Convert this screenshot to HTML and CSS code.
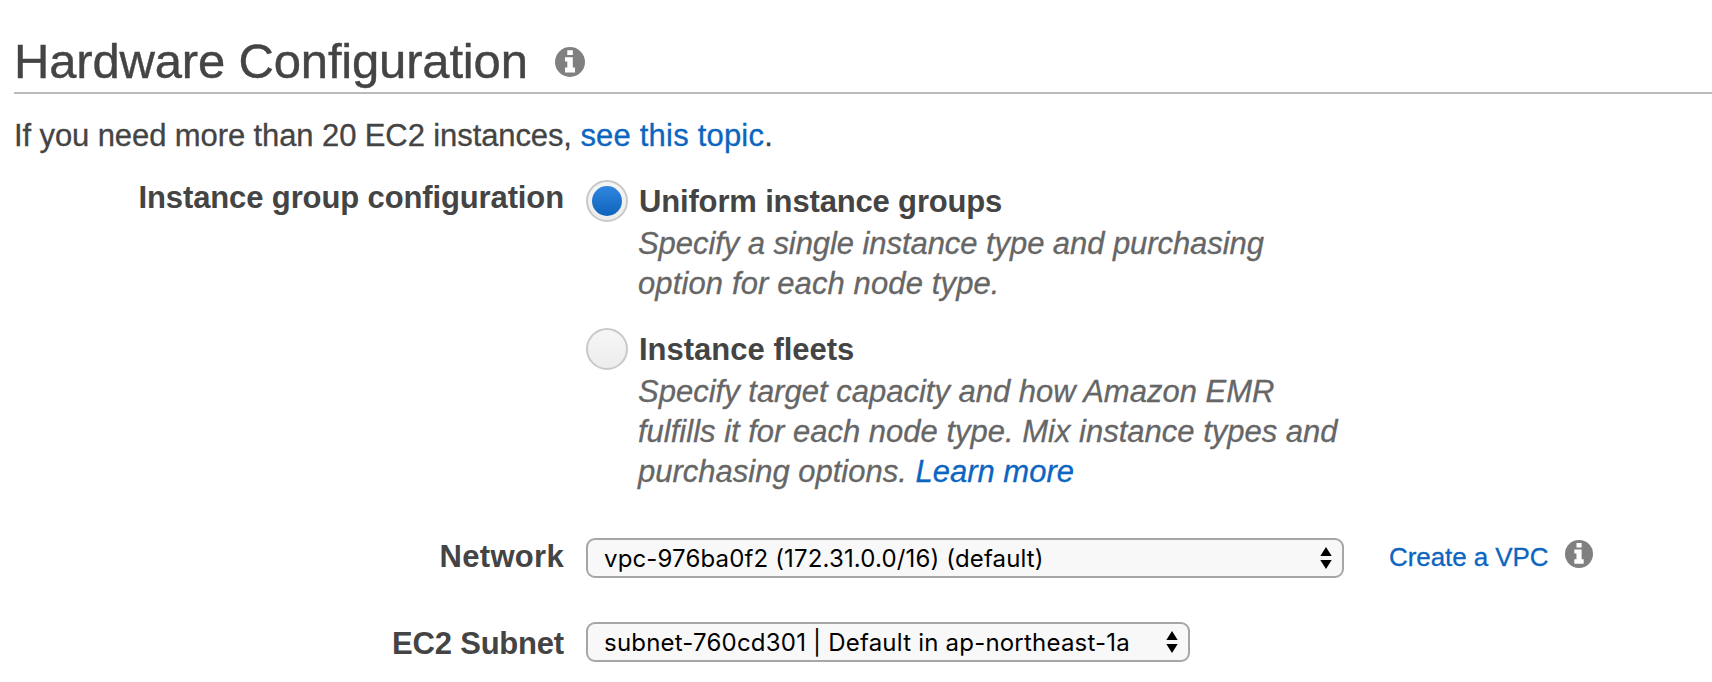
FILE: index.html
```
<!DOCTYPE html>
<html lang="en">
<head>
<meta charset="utf-8">
<title>Hardware Configuration</title>
<link rel="stylesheet" href="styles.css">
</head>
<body>
<main class="page">
  <header class="heading">
    <h1>Hardware Configuration</h1>
    <svg class="info info-title" viewBox="0 0 30 30"><circle cx="15" cy="15" r="15"/><path d="M12.3 3.3h5.5v4.8h-5.5zM10 10.2h7.8v10.4H20v4.8H10v-4.8h2.3v-6.2H10z"/></svg>
  </header>
  <p class="intro">If you need more than 20 EC2 instances, <a>see this topic</a>.</p>
  <section class="row group">
    <div class="label group-label">Instance group configuration</div>
    <div class="options">
      <div class="option">
        <span class="radio checked"></span>
        <div class="copy">
          <div class="name uniform">Uniform instance groups</div>
          <div class="desc"><span class="tight">Specify a single instance type and purchasing</span><br><span class="loose">option for each node type.</span></div>
        </div>
      </div>
      <div class="option">
        <span class="radio"></span>
        <div class="copy">
          <div class="name">Instance fleets</div>
          <div class="desc">Specify target capacity and how Amazon EMR<br>fulfills it for each node type. Mix instance types and<br>purchasing options. <a>Learn more</a></div>
        </div>
      </div>
    </div>
  </section>
  <section class="row network">
    <div class="label network-label">Network</div>
    <div class="select wide"><span>vpc-976ba0f2 (172.31.0.0/16) (default)</span><svg class="arrows" viewBox="0 0 12 24"><path d="M6 1l5.7 9H.3zM6 23l5.7-9H.3z"/></svg></div>
    <a class="create">Create a VPC</a>
    <svg class="info info-small" viewBox="0 0 30 30"><circle cx="15" cy="15" r="15"/><path d="M12.3 3.3h5.5v4.8h-5.5zM10 10.2h7.8v10.4H20v4.8H10v-4.8h2.3v-6.2H10z"/></svg>
  </section>
  <section class="row subnet">
    <div class="label subnet-label">EC2 Subnet</div>
    <div class="select narrow"><span>subnet-760cd301 | Default in ap-northeast-1a</span><svg class="arrows" viewBox="0 0 12 24"><path d="M6 1l5.7 9H.3zM6 23l5.7-9H.3z"/></svg></div>
  </section>
</main>
</body>
</html>
```
FILE: styles.css
```
* { box-sizing: border-box; }
body { margin: 0; background: #fff; color: #444; font-family: "Liberation Sans", Arial, sans-serif; }
.page { width: 1712px; height: 682px; padding: 34px 0 0 14px; overflow: hidden; }
a { color: #0c65c0; }
.heading { display: flex; height: 60px; border-bottom: 2px solid #bbb; }
h1 { margin: 0; width: 541px; font-size: 49px; font-weight: 400; line-height: 54px; letter-spacing: -.17px; white-space: nowrap; -webkit-text-stroke: .4px; }
.info { flex: none; fill: #808080; }
.info path { fill: #fff; }
.info-title { width: 30px; height: 30px; margin-top: 13px; }
.intro { margin: 22px 0 0; font-size: 31px; line-height: 40px; letter-spacing: -.1px; white-space: nowrap; -webkit-text-stroke: .3px; }
.intro a { letter-spacing: .2px; }
.row { display: flex; }
.label { width: 550px; flex: none; text-align: right; font-size: 31px; font-weight: 700; line-height: 40px; white-space: nowrap; }
.group-label { letter-spacing: -.12px; }
.network-label { margin-top: -1px; letter-spacing: .3px; }
.subnet-label { margin-top: 2px; letter-spacing: -.2px; }
.group { margin-top: 22px; height: 360px; }
.options { margin-left: 22px; padding-top: 2px; }
.option { display: flex; height: 148px; }
.radio { display: flex; align-items: center; justify-content: center; width: 42px; height: 42px; flex: none; border: 2px solid #c9c9c9; border-radius: 50%; background: linear-gradient(#f6f6f6, #ececec); }
.checked::before { content: ""; width: 30px; height: 30px; border-radius: 50%; background: linear-gradient(#3186df, #0e63bb); }
.copy { margin-left: 10px; white-space: nowrap; }
.name { padding-top: 2px; padding-left: 1px; font-size: 31px; font-weight: 700; line-height: 40px; }
.uniform { letter-spacing: -.16px; }
.desc { margin-top: 2px; font-size: 31px; font-style: italic; line-height: 40px; color: #666; -webkit-text-stroke: .3px; }
.tight { letter-spacing: -.07px; }
.loose { letter-spacing: .12px; }
.select { display: flex; align-items: center; justify-content: space-between; height: 40px; margin-left: 22px; padding: 0 10px 0 16px; border: 2px solid #a6a6a6; border-radius: 9px; background: #f8f8f8; color: #000; font-family: Inter, sans-serif; font-size: 24px; letter-spacing: .15px; white-space: nowrap; }
.wide { width: 758px; }
.narrow { width: 604px; letter-spacing: .21px; }
.arrows { width: 12px; height: 24px; }
.create { margin-left: 45px; width: 176px; font-size: 26px; line-height: 39px; letter-spacing: -.08px; -webkit-text-stroke: .3px; }
.info-small { width: 28px; height: 28px; margin-top: 2px; }
.subnet { margin-top: 44px; height: 40px; }
```
